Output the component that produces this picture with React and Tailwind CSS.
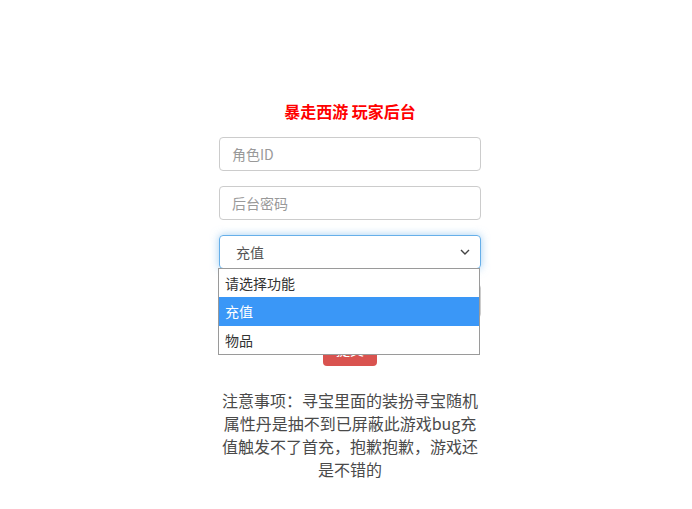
export default function App() {
  const font = { fontFamily: '"Noto Sans CJK SC", "Noto Sans", sans-serif' };
  return (
    <div className="relative w-[692px] h-[509px] bg-white" style={font}>
      <div className="pl-[219px] pt-[99px] w-[481px]">
        <div className="w-[262px] flex flex-col">
          <h1 className="text-center text-[16px] leading-[24px] font-bold text-[#ff0000] mb-[14px]">
            暴走西游 玩家后台
          </h1>
          <div className="h-[34px] border border-[#cccccc] rounded-[4px] pl-[12px] flex items-center text-[14px] text-[#999999] mb-[15px]">
            角色ID
          </div>
          <div className="h-[34px] border border-[#cccccc] rounded-[4px] pl-[12px] flex items-center text-[14px] text-[#999999] mb-[15px]">
            后台密码
          </div>
          <div className="relative h-[34px] border border-[#66afe9] rounded-[4px] pl-[16px] pr-[8px] flex items-center justify-between text-[14px] text-[#555555] shadow-[0_0_8px_rgba(102,175,233,0.6)] mb-[15px]">
            <span>充值</span>
            <svg width="10" height="6" viewBox="0 0 10 6" className="mr-[2px]">
              <path d="M1 1 L5 5 L9 1" fill="none" stroke="#444" strokeWidth="1.4" />
            </svg>
            <div className="absolute left-[-2px] top-[32px] w-[262px] border border-[#9a9a9a] bg-white text-[14px] text-[#333333] z-10">
              <div className="h-[28px] flex items-center pl-[6px]">请选择功能</div>
              <div className="h-[29px] flex items-center pl-[6px] bg-[#3a97f7] text-white">充值</div>
              <div className="h-[28px] flex items-center pl-[6px]">物品</div>
            </div>
          </div>
          <div className="h-[34px] border border-[#cccccc] rounded-[4px] mb-[14px]" />
          <div className="flex justify-center">
            <button className="w-[54px] h-[34px] rounded-[4px] bg-[#d9534f] text-white text-[14px]">
              提交
            </button>
          </div>
          <div className="mt-[23px] text-center text-[16px] leading-[23px] text-[#4a4a4a]">
            <div>注意事项：寻宝里面的装扮寻宝随机</div>
            <div>属性丹是抽不到已屏蔽此游戏bug充</div>
            <div>值触发不了首充，抱歉抱歉，游戏还</div>
            <div>是不错的</div>
          </div>
        </div>
      </div>
    </div>
  );
}
